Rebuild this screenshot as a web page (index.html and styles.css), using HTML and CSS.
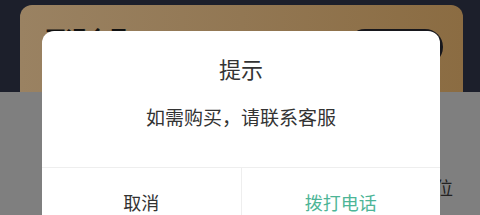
FILE: index.html
```html
<!DOCTYPE html>
<html lang="zh-CN">
<head>
    <meta charset="UTF-8">
    <meta name="viewport" content="width=device-width, initial-scale=1.0">
    <title>提示</title>
    <link rel="stylesheet" href="styles.css">
</head>
<body>

    <div class="top">
        <div class="vip-card">
            <span class="vip-title">开通会员</span>
            <span class="vip-btn"></span>
        </div>
    </div>

    <div class="mask">
        <span class="behind-left">·</span>
        <span class="behind-right">位</span>
    </div>

    <div class="dialog">
        <h2 class="dialog-title">提示</h2>
        <p class="dialog-text">如需购买，请联系客服</p>
        <div class="dialog-buttons">
            <button class="btn-cancel">取消</button>
            <button class="btn-call">拨打电话</button>
        </div>
    </div>

</body>
</html>
```

FILE: styles.css
```css
body {
    font-family: "Noto Sans CJK SC", "Noto Sans", sans-serif;
    margin: 0;
    padding: 0;
    width: 480px;
    height: 215px;
    overflow: hidden;
    position: relative;
}

.top {
    background-color: #1c1f2b;
    height: 92px;
    overflow: hidden;
    padding-top: 5px;
    box-sizing: border-box;
}

.vip-card {
    margin-left: 20px;
    width: 443px;
    height: 120px;
    border-radius: 12px;
    background: linear-gradient(90deg, #9a8262 0%, #927753 50%, #8b6c42 100%);
    display: flex;
    align-items: flex-start;
    justify-content: space-between;
    padding: 18px 20px 0 25px;
    box-sizing: border-box;
}

.vip-title {
    font-size: 21px;
    font-weight: bold;
    color: #111;
    line-height: 28px;
}

.vip-btn {
    display: block;
    width: 96px;
    height: 36px;
    margin-top: 6px;
    border-radius: 18px;
    background-color: #17171c;
}

.mask {
    background-color: #7f7f7f;
    height: 123px;
    position: relative;
}

.behind-left {
    position: absolute;
    left: 38px;
    top: 88px;
    font-size: 12px;
    color: #333;
}

.behind-right {
    position: absolute;
    left: 435px;
    top: 82px;
    font-size: 18px;
    color: #222;
}

.dialog {
    position: absolute;
    left: 42px;
    top: 31px;
    width: 398px;
    height: 184px;
    overflow: hidden;
    background-color: #fff;
    border-radius: 12px 12px 0 0;
    text-align: center;
}

.dialog-title {
    margin: 0;
    padding-top: 22px;
    font-size: 22px;
    font-weight: normal;
    color: #333;
    line-height: 30px;
}

.dialog-text {
    margin: 0;
    padding-top: 21px;
    font-size: 19px;
    color: #333;
    line-height: 26px;
    height: 63px;
    box-sizing: content-box;
}

.dialog-buttons {
    display: flex;
    height: 47px;
    border-top: 1px solid #eeeeee;
}

.dialog-buttons button {
    flex: 1;
    border: none;
    background: none;
    font-family: inherit;
    font-size: 18px;
    line-height: 26px;
    padding: 20px 0 0;
    align-self: stretch;
}

.btn-cancel {
    color: #333;
    border-right: 1px solid #eeeeee !important;
}

.btn-call {
    color: #4db597;
}
```
